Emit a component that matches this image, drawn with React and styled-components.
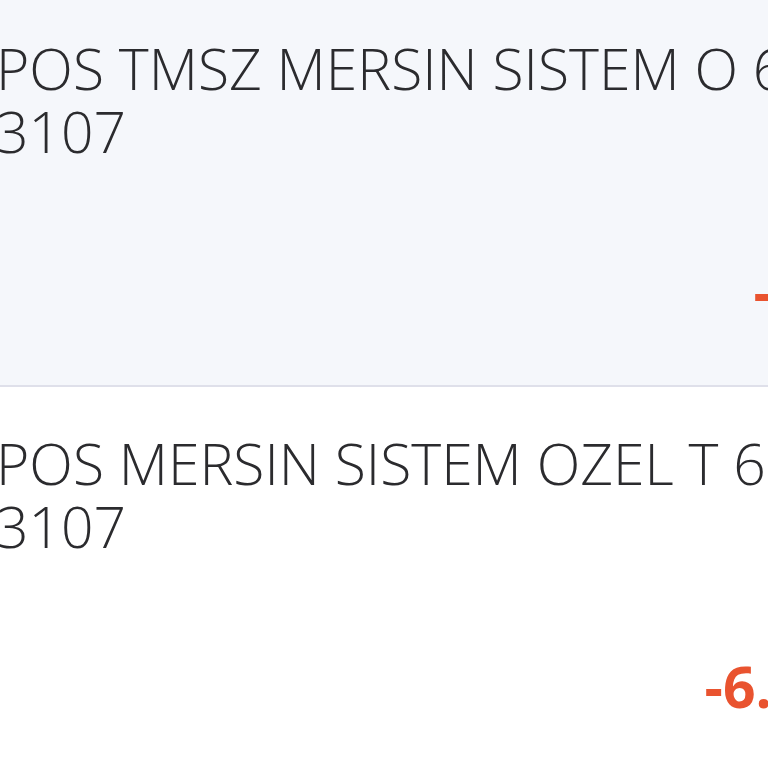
import styled, { createGlobalStyle } from "styled-components";

const GlobalStyle = createGlobalStyle`
  html, body {
    margin: 0;
    padding: 0;
    background: #ffffff;
  }
  body {
    font-family: "Open Sans", "Noto Sans", sans-serif;
    overflow: hidden;
  }
`;

const transactions = [
  {
    id: 1,
    title: "POS TMSZ MERSIN SISTEM O 6759 40** ****\n3107",
    amount: "-850,00 TL",
    selected: true,
  },
  {
    id: 2,
    title: "POS MERSIN SISTEM OZEL T 6759 40** ****\n3107",
    amount: "-6.250,00 TL",
    selected: false,
  },
];

const App = () => {
  return (
    <Screen>
      <GlobalStyle />
      <List>
        {transactions.map((t) => (
          <Row key={t.id} selected={t.selected}>
            <Title>{t.title}</Title>
            <Amount>{t.amount}</Amount>
          </Row>
        ))}
      </List>
    </Screen>
  );
};

const Screen = styled.div`
  width: 768px;
  height: 768px;
  overflow: hidden;
  background: #ffffff;
`;

const List = styled.div`
  width: 1059px;
  margin-top: -8px;
  margin-left: -4px;
  display: flex;
  flex-direction: column;
`;

const Row = styled.div`
  display: flex;
  flex-direction: column;
  padding: 45px 24px 62px 0;
  background: ${({ selected }) => (selected ? "#f5f7fb" : "#ffffff")};
  border-bottom: 2px solid #dfe0ea;
`;

const Title = styled.div`
  font-size: 57px;
  line-height: 63px;
  font-weight: 300;
  color: #2b2b2e;
  white-space: pre;
`;

const Amount = styled.div`
  margin-top: 97px;
  align-self: flex-end;
  font-size: 57px;
  line-height: 63px;
  font-weight: 700;
  color: #e9532f;
`;

export default App;
